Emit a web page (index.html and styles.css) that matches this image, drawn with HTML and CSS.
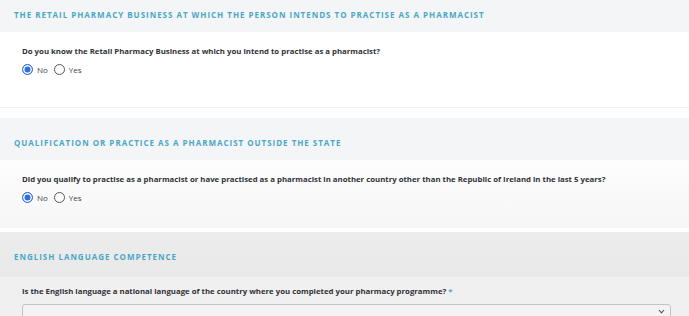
FILE: index.html
```html
<!DOCTYPE html>
<html lang="en">
<head>
    <meta charset="UTF-8">
    <meta name="viewport" content="width=device-width, initial-scale=1.0">
    <title>Pharmacist Registration</title>
    <link rel="stylesheet" href="styles.css">
</head>
<body>
    <div class="form">
        <div class="section first">
            <div class="section-head">
                <h2>The Retail Pharmacy Business at which the person intends to practise as a pharmacist</h2>
            </div>
            <div class="section-body">
                <p class="question">Do you know the Retail Pharmacy Business at which you intend to practise as a pharmacist?</p>
                <div class="radios">
                    <label class="radio"><span class="dot checked"></span>No</label>
                    <label class="radio"><span class="dot"></span>Yes</label>
                </div>
            </div>
        </div>

        <div class="section second">
            <div class="section-head">
                <h2>Qualification or practice as a pharmacist outside the State</h2>
            </div>
            <div class="section-body">
                <p class="question">Did you qualify to practise as a pharmacist or have practised as a pharmacist in another country other than the Republic of Ireland in the last 5 years?</p>
                <div class="radios">
                    <label class="radio"><span class="dot checked"></span>No</label>
                    <label class="radio"><span class="dot"></span>Yes</label>
                </div>
            </div>
        </div>

        <div class="section third">
            <div class="section-head">
                <h2>English Language Competence</h2>
            </div>
            <div class="section-body">
                <p class="question">Is the English language a national language of the country where you completed your pharmacy programme? <span class="req">*</span></p>
                <div class="select">
                    <svg class="chevron" width="7" height="5" viewBox="0 0 7 5">
                        <path d="M1 1 L3.5 3.8 L6 1" fill="none" stroke="#555" stroke-width="1.1"/>
                    </svg>
                </div>
            </div>
        </div>
    </div>
</body>
</html>
```

FILE: styles.css
```css
body {
    margin: 0;
    font-family: 'Open Sans', 'Liberation Sans', sans-serif;
    background-color: #fff;
    color: #333;
    overflow: hidden;
}
.form {
    width: 689px;
}
.section-head {
    display: flex;
    align-items: center;
    background-color: #f4f5f6;
    padding: 0 14px;
}
.section-head h2 {
    margin: 0;
    font-size: 8px;
    font-weight: 700;
    letter-spacing: 0.98px;
    text-transform: uppercase;
    color: #4aa7c7;
}
.section-body {
    padding: 0 22px;
}
.question {
    margin: 0;
    font-size: 7.8px;
    font-weight: 700;
    color: #303236;
}
.req {
    color: #4aa7c7;
}
.radios {
    display: flex;
    align-items: center;
    gap: 6px;
    margin-top: 8px;
    font-size: 8px;
    color: #444;
}
.radio {
    display: flex;
    align-items: center;
    gap: 4px;
}
.dot {
    width: 11px;
    height: 11px;
    border: 1px solid #555;
    border-radius: 50%;
    box-sizing: border-box;
    background-color: #fff;
}
.dot.checked {
    border: 1px solid #2f6fe0;
    background-color: #2f6fe0;
    box-shadow: inset 0 0 0 1.5px #fff;
}

/* section 1 */
.first .section-head {
    height: 28px;
    padding-bottom: 4px;
}
.first .section-body {
    height: 76px;
    padding-top: 14px;
    box-sizing: border-box;
    border-bottom: 1px solid #f0f0f0;
}

/* section 2 */
.second {
    margin-top: 10px;
}
.second .section-head {
    height: 36px;
    padding-top: 6px;
}
.second .section-body {
    height: 68px;
    padding-top: 14px;
    box-sizing: border-box;
    background: linear-gradient(#fdfdfd, #f6f6f6);
}

/* section 3 */
.third {
    margin-top: 4px;
    background-color: #efefef;
}
.third .section-head {
    height: 42px;
    padding-top: 3px;
    background: linear-gradient(#ececec, #e9e9e9);
}
.third .section-body {
    padding-top: 9px;
    background-color: #f0f0f0;
}
.select {
    position: relative;
    margin-top: 8px;
    margin-right: -4px;
    height: 24px;
    border: 1px solid #c4c4c4;
    border-radius: 3px;
    background-color: #f3f3f3;
}
.chevron {
    position: absolute;
    right: 5px;
    top: 4px;
}
```
